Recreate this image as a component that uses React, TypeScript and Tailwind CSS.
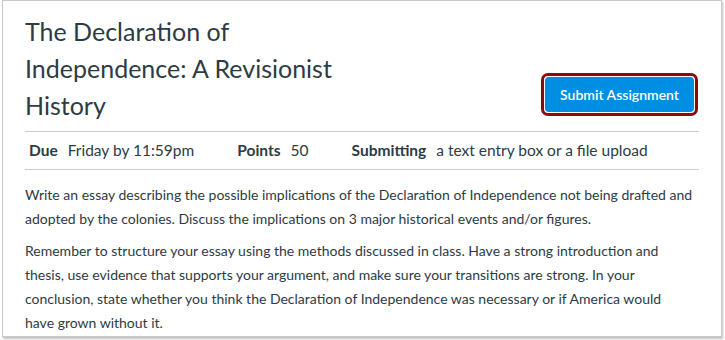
import React from "react";

const meta = [
  { label: "Due", value: "Friday by 11:59pm", gap: "mr-[43px]" },
  { label: "Points", value: "50", gap: "mr-[43px]" },
  { label: "Submitting", value: "a text entry box or a file upload", gap: "" },
];

const App: React.FC = () => {
  return (
    <div className="w-[725px] h-[340px] bg-white pl-[2px] font-['Lato',sans-serif] text-[#2d3b45]">
      <div className="w-[720px] h-[337px] border border-[#c9c9c9] bg-white shadow-[1px_2px_2px_rgba(0,0,0,0.25)] px-[22px]">
        {/* header */}
        <div className="flex items-end justify-between pt-[12px] pb-[7px] border-b border-[#c7cdd1]">
          <h1 className="w-[340px] text-[25px] leading-[37px] font-normal">
            The Declaration of Independence: A Revisionist History
          </h1>
          <div className="mb-[8px] mr-[1px] rounded-[7px] border-[3px] border-[#8b0a0a] p-[1px]">
            <button className="h-[35px] px-[15px] rounded-[4px] bg-[#008ee2] text-white text-[14px] font-semibold">
              Submit Assignment
            </button>
          </div>
        </div>

        {/* details */}
        <div className="flex items-center h-[38px] pl-[4px] text-[15.5px] border-b border-[#c7cdd1]">
          {meta.map((m) => (
            <div key={m.label} className={`flex items-center gap-[10px] ${m.gap}`}>
              <span className="font-bold">{m.label}</span>
              <span>{m.value}</span>
            </div>
          ))}
        </div>

        {/* description */}
        <div className="pt-[13px] text-[14px] leading-[24px] whitespace-nowrap">
          <p className="mb-[8px]">
            Write an essay describing the possible implications of the Declaration of Independence not being drafted and
            <br />
            adopted by the colonies. Discuss the implications on 3 major historical events and/or figures.
          </p>
          <p>
            Remember to structure your essay using the methods discussed in class. Have a strong introduction and
            <br />
            thesis, use evidence that supports your argument, and make sure your transitions are strong. In your
            <br />
            conclusion, state whether you think the Declaration of Independence was necessary or if America would
            <br />
            have grown without it.
          </p>
        </div>
      </div>
    </div>
  );
};

export default App;
